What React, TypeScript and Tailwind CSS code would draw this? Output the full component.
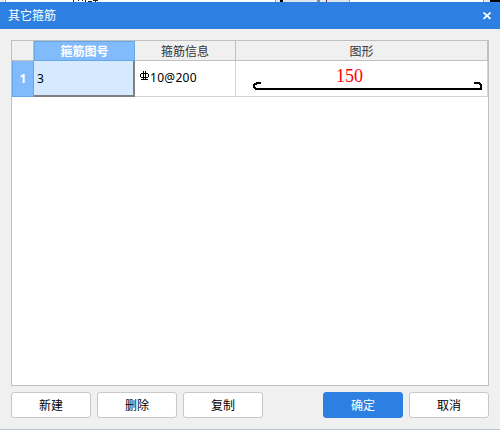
import React from 'react';

interface DialogButtonProps {
    label: string;
    primary?: boolean;
}

const DialogButton: React.FC<DialogButtonProps> = ({ label, primary = false }) => (
    <button
        type="button"
        className={`w-20 h-[26px] pt-px rounded-[3px] border text-xs leading-[24px] ${primary ? 'bg-[#2d80e2] border-[#2d80e2] text-white' : 'bg-white border-[#c8c8c8] text-black'}`}
    >
        {label}
    </button>
);

// Grade mark printed before the bar diameter
const RebarSymbol: React.FC = () => (
    <svg width="9" height="10" viewBox="0 0 9 10" fill="#000" shapeRendering="crispEdges" className="shrink-0">
        <path d="M3 0h1v9h-1zM5 0h1v9h-1zM1 2h7v1h-7zM0 3h1v3h-1zM8 3h1v3h-1zM1 6h7v1h-7zM1 8h7v1h-7z" />
    </svg>
);

const HookedBar: React.FC = () => (
    <svg width="252" height="35" viewBox="0 0 252 35" fill="none" stroke="#000" strokeWidth="2" shapeRendering="crispEdges" className="absolute inset-0">
        <path d="M25 22H21L18 24V26L20 28H245V24L243 22H238" />
    </svg>
);

const App: React.FC = () => {
    return (
        <div className="w-[500px] h-[430px] flex flex-col bg-[#f0f0f0] overflow-hidden font-['Noto_Sans','Noto_Sans_CJK_SC',sans-serif] text-xs text-black">
            {/* Sliver of the window behind */}
            <div className="h-0.5 shrink-0 flex bg-white">
                <div className="w-1 bg-[#e4e8ec]" />
                <div className="w-px ml-px bg-[#a0a0a0]" />
                <div className="w-[64px]" />
                <svg width="30" height="2" viewBox="0 0 30 2" fill="#222" shapeRendering="crispEdges">
                    <path d="M3 0h1v2h-1zM8 0h1v1h-1zM12 0h1v1h-1zM15 0h1v2h-1zM18 1h4v1h-4zM25 0h1v2h-1zM23 0h5v1h-5z" />
                </svg>
                <div className="w-px ml-[175px] bg-[#a0a0a0]" />
                <div className="w-1 bg-[#e4e8ec]" />
                <div className="w-[3px] bg-black" />
                <div className="w-[67px] bg-[#dce6eb] border-r border-[#a0a0a0] flex">
                    <div className="w-[3px] ml-[34px] bg-[#8b80a8]" />
                    <div className="w-px ml-1.5 bg-[#702050]" />
                </div>
                <div className="w-px ml-[133px] bg-[#a0a0a0]" />
                <div className="w-1.5 bg-[#e4e8ec]" />
                <div className="flex-1 bg-black" />
            </div>

            <div className="h-[27px] shrink-0 flex items-center justify-between pl-2 pr-[9px] bg-[#2d80e2] text-white">
                <span className="leading-none">其它箍筋</span>
                <svg width="8" height="8" viewBox="0 0 8 8" stroke="#fff" strokeWidth="1.7">
                    <path d="M0.5 0.5L7.5 7M7.5 0.5L0.5 7" />
                </svg>
            </div>

            <div className="w-[478px] h-[346px] shrink-0 mt-[11px] ml-[11px] bg-white border border-[#c0c0c0]">
                <div className="grid grid-cols-[22px_101px_101px_252px] grid-rows-[20px_36px] text-center">
                    <div className="bg-[#f0f0f0] border-r border-b border-[#c0c0c0]" />
                    <div className="bg-[#82bbfb] border border-[#66a7e8] text-white font-bold leading-[19px]">箍筋图号</div>
                    <div className="bg-[#f0f0f0] border-r border-b border-[#c0c0c0] text-[#333] leading-[21px]">箍筋信息</div>
                    <div className="bg-[#f0f0f0] border-r border-b border-[#c0c0c0] text-[#333] leading-[21px]">图形</div>

                    <div className="bg-[#82bbfb] border border-t-0 border-[#66a7e8] text-white font-bold leading-[35px]">1</div>
                    <div className="bg-[#d6eaff] border-r-2 border-b-2 border-[#808080] text-left pl-[3px] leading-[35px]">3</div>
                    <div className="border-r border-b border-[#d4d4d4] flex items-start pl-[5px]">
                        <div className="pt-2.5"><RebarSymbol /></div>
                        <span className="pl-px leading-[34px] tracking-[0.3px]">10@200</span>
                    </div>
                    <div className="relative border-r border-b border-[#d4d4d4]">
                        <HookedBar />
                        <span className="absolute left-[100px] top-[6px] font-['Liberation_Serif',serif] text-[18px] leading-[18px] text-[#ff0000]">150</span>
                    </div>
                </div>
            </div>

            <div className="flex shrink-0 mt-1.5 px-[11px] justify-between">
                <div className="flex gap-1.5">
                    <DialogButton label="新建" />
                    <DialogButton label="删除" />
                    <DialogButton label="复制" />
                </div>
                <div className="flex gap-1.5">
                    <DialogButton label="确定" primary />
                    <DialogButton label="取消" />
                </div>
            </div>

            <div className="h-px mt-auto shrink-0 bg-[#b8c4d8]" />
        </div>
    );
};

export default App;
